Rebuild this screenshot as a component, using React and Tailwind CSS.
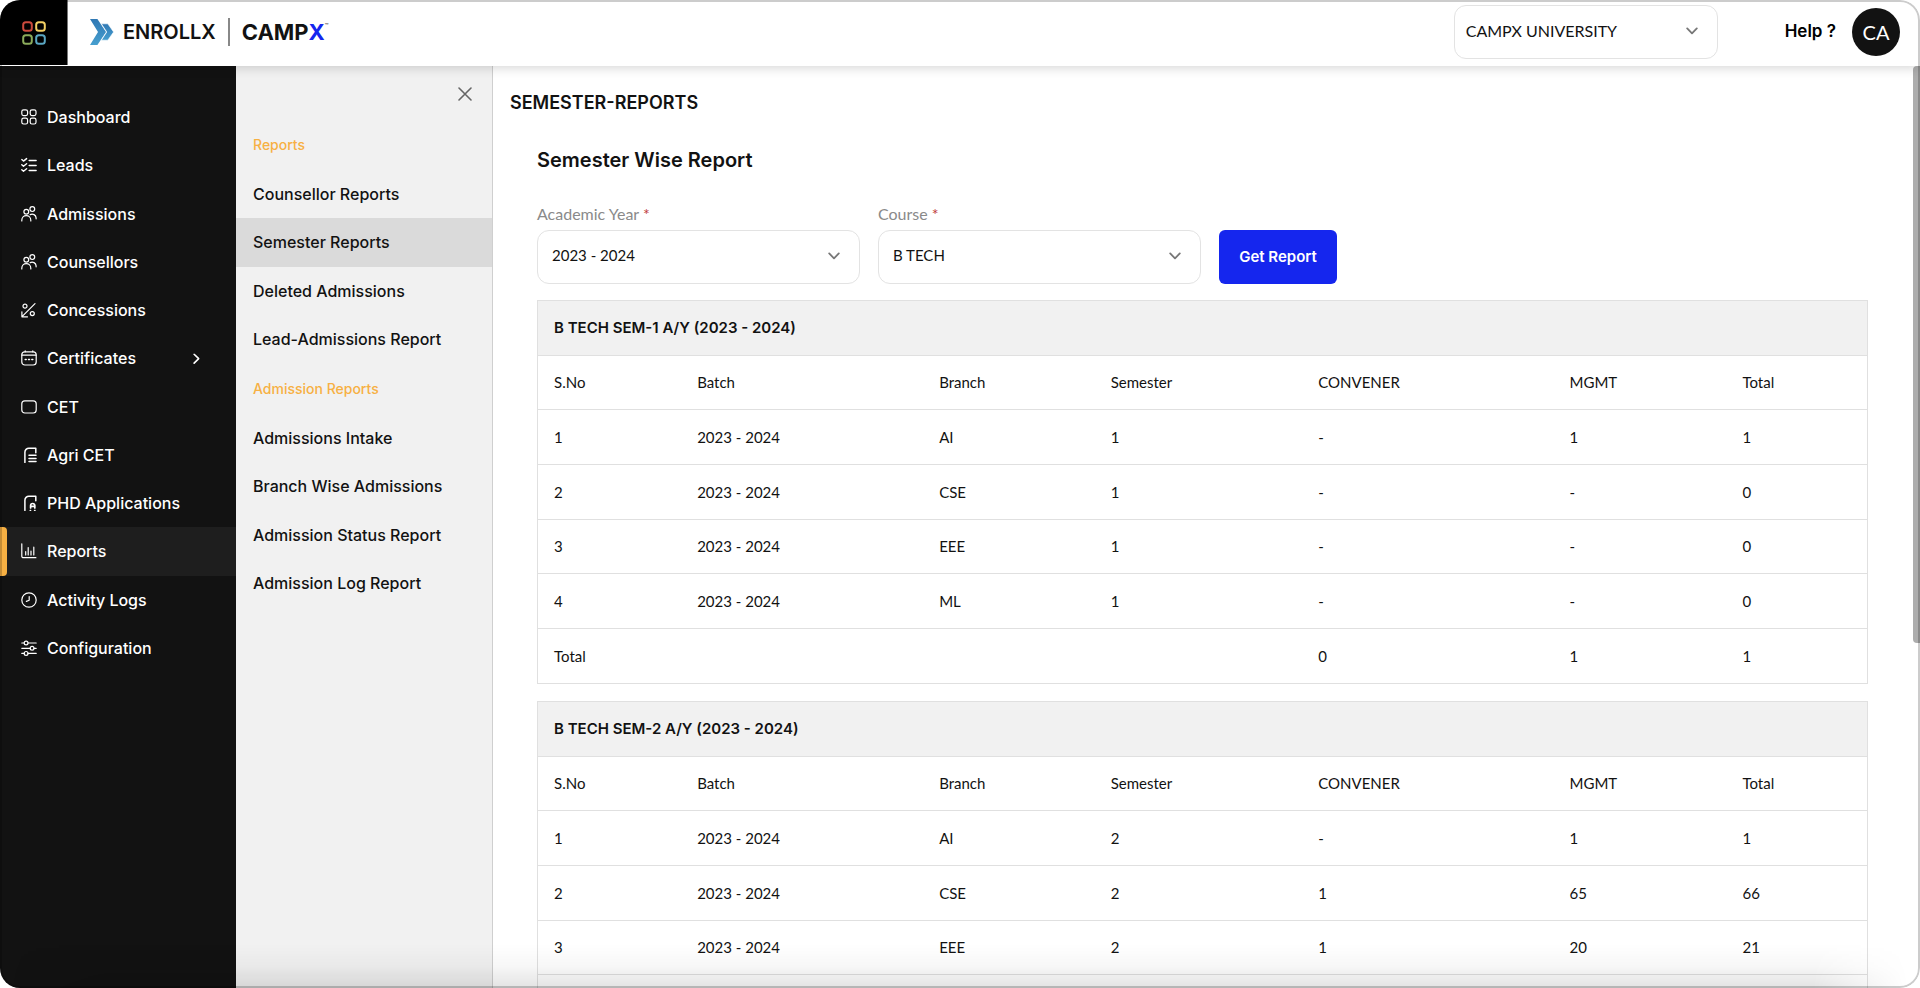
import React from "react";

const svgProps = {
  viewBox: "0 0 16 16",
  fill: "none",
  stroke: "currentColor",
  strokeLinecap: "round",
  strokeLinejoin: "round",
  "aria-hidden": true,
};

const icons = {
  dashboard: (
    <>
      <rect x="0.8" y="0.8" width="5.8" height="5.8" rx="1.8" />
      <rect x="9.2" y="0.8" width="5.8" height="5.8" rx="1.8" />
      <rect x="0.8" y="9.2" width="5.8" height="5.8" rx="1.8" />
      <rect x="9.2" y="9.2" width="5.8" height="5.8" rx="1.8" />
    </>
  ),
  leads: (
    <>
      <path d="M0.8 2.6l1.7 1.5L5.6 1.6M0.8 7.7l1.7 1.5 3.1-2.5M0.8 12.8l1.7 1.5 3.1-2.5" strokeWidth="1.4" />
      <path d="M8.2 3.4h6.9M8.2 8.4h6.9M8.2 13.5h6.9" strokeWidth="1.5" />
    </>
  ),
  people: (
    <>
      <circle cx="5.3" cy="5.7" r="2.4" />
      <circle cx="11.3" cy="3.1" r="2.4" />
      <path d="M0.8 15v-.8a4.5 4.5 0 0 1 9 0v.8M9.2 8.6a4 4 0 0 1 5.9 3.3v.9" />
    </>
  ),
  concessions: (
    <>
      <path d="M14 1.6L1 14.6M0.9 9.8v5h5.6" />
      <circle cx="4" cy="4.2" r="2" />
      <circle cx="11.3" cy="11.6" r="2" />
    </>
  ),
  certificates: (
    <>
      <rect x="0.8" y="1.8" width="14.4" height="13.2" rx="3" />
      <path d="M1 5.2h14M4.2 0.8v1M11.8 0.8v1" />
      <path d="M4.2 9.4h1M7.5 9.4h1M10.8 9.4h1" strokeWidth="1.5" />
    </>
  ),
  cet: <rect x="0.8" y="1.8" width="14.4" height="12.2" rx="3" />,
  agri: (
    <>
      <path d="M3.9 15.4V5.2a4 4 0 0 1 4-4h6.9v4.6" strokeWidth="1.5" />
      <path d="M8 8.2h7M8 11.4h7M8 14.4h7" strokeWidth="1.5" />
    </>
  ),
  phd: (
    <>
      <path d="M3.9 15.4V5.2a4 4 0 0 1 4-4h6.9v4.6" strokeWidth="1.5" />
      <path d="M9.6 13v-2.400a2.100 2.100 0 0 1 4.200 0v2.400M9.600 11.400h4.200" strokeWidth="1.7" />
      <path d="M9 15.300h.8M13.400 15.300h.8" strokeWidth="1.2" />
    </>
  ),
  reports: <path d="M0.8 0.8v12.4a1.5 1.5 0 0 0 1.5 1.5h12.6M4.7 12V8.6M7.2 12V4.6M10 12V8M12.8 12V4.2" />,
  activity: (
    <>
      <circle cx="8" cy="8" r="7.2" />
      <path d="M8.2 4.6v3.6L5.4 9.4" />
    </>
  ),
  configuration: (
    <>
      <path d="M0.8 3h2.4M7 3h8.2M0.8 8.3h8.4M13 8.3h2.2M0.8 13.4h2.4M7 13.4h8.2" />
      <circle cx="5.1" cy="3" r="1.9" />
      <circle cx="11.1" cy="8.3" r="1.9" />
      <circle cx="5.1" cy="13.4" r="1.9" />
    </>
  ),
};

const navItems = [
  ["Dashboard", "dashboard"],
  ["Leads", "leads"],
  ["Admissions", "people"],
  ["Counsellors", "people"],
  ["Concessions", "concessions"],
  ["Certificates", "certificates"],
  ["CET", "cet"],
  ["Agri CET", "agri"],
  ["PHD Applications", "phd"],
  ["Reports", "reports"],
  ["Activity Logs", "activity"],
  ["Configuration", "configuration"],
];

const subNav = [
  {
    heading: "Reports",
    items: ["Counsellor Reports", "Semester Reports", "Deleted Admissions", "Lead-Admissions Report"],
  },
  {
    heading: "Admission Reports",
    items: ["Admissions Intake", "Branch Wise Admissions", "Admission Status Report", "Admission Log Report"],
  },
];

const columns = [
  ["S.No", "w-[10.8%]"],
  ["Batch", "w-[18.2%]"],
  ["Branch", "w-[12.9%]"],
  ["Semester", "w-[15.6%]"],
  ["CONVENER", "w-[18.9%]"],
  ["MGMT", "w-[13%]"],
  ["Total", "w-[10.6%]"],
];

const tables = [
  {
    title: "B TECH SEM-1 A/Y (2023 - 2024)",
    rows: [
      ["1", "2023 - 2024", "AI", "1", "-", "1", "1"],
      ["2", "2023 - 2024", "CSE", "1", "-", "-", "0"],
      ["3", "2023 - 2024", "EEE", "1", "-", "-", "0"],
      ["4", "2023 - 2024", "ML", "1", "-", "-", "0"],
      ["Total", "", "", "", "0", "1", "1"],
    ],
  },
  {
    title: "B TECH SEM-2 A/Y (2023 - 2024)",
    rows: [
      ["1", "2023 - 2024", "AI", "2", "-", "1", "1"],
      ["2", "2023 - 2024", "CSE", "2", "1", "65", "66"],
      ["3", "2023 - 2024", "EEE", "2", "1", "20", "21"],
      ["", "", "", "", "", "", ""],
    ],
  },
];

function Chevron({ className }) {
  return (
    <svg viewBox="0 0 12 8" className={className} fill="none" stroke="currentColor" strokeWidth="1.8" strokeLinecap="round" strokeLinejoin="round" aria-hidden="true">
      <path d="M1.2 1.4L6 6.4l4.8-5" />
    </svg>
  );
}

function SelectBox({ id, value, label, padding }) {
  return (
    <div className="relative">
      <select
        id={id}
        aria-label={label}
        defaultValue={value}
        className={`h-[54px] w-full appearance-none rounded-xl border border-[#e3e3e3] bg-white pb-[3px] font-['Lato',sans-serif] text-[#121212] ${padding}`}
      >
        <option>{value}</option>
      </select>
      <Chevron className="pointer-events-none absolute top-[22px] right-5 w-3 text-[#777]" />
    </div>
  );
}

function Header() {
  return (
    <header className="relative z-10 flex h-[66px] shrink-0 items-center bg-white pr-5 pb-0.5 shadow-[0_2px_10px_rgba(0,0,0,0.16)]">
      <button type="button" aria-label="Apps" className="mb-px flex h-[65px] w-[68px] items-center justify-center self-start border-r border-[#777] bg-black">
        <svg viewBox="0 0 24 24" className="w-6" fill="none" strokeWidth="2" aria-hidden="true">
          <rect x="1.2" y="1.2" width="8.6" height="8.6" rx="2.6" stroke="#cb4a3d" />
          <rect x="14.2" y="1.2" width="8.6" height="8.6" rx="2.6" stroke="#f2cf63" />
          <rect x="1.2" y="14.2" width="8.6" height="8.6" rx="2.6" stroke="#8bab5b" />
          <rect x="14.2" y="14.2" width="8.6" height="8.6" rx="2.6" stroke="#5aa6c2" />
        </svg>
      </button>
      <a href="#home" className="ml-[22px] flex items-center">
        <svg viewBox="0 0 24 26" className="w-6" aria-hidden="true">
          <defs>
            <linearGradient id="arrow" x1="0" y1="0" x2="0" y2="1">
              <stop offset="0" stopColor="#2f78b4" />
              <stop offset="1" stopColor="#479fcf" />
            </linearGradient>
          </defs>
          <path fill="url(#arrow)" d="M0 0h7.4l8.6 13-8.6 13H0l8-13z" />
          <path fill="url(#arrow)" stroke="#fff" strokeWidth="0.6" d="M11.4 4.800h6.400L23.600 13l-5.800 8.200h-6.400L16.800 13z" />
        </svg>
        <span className="ml-[9px] text-[20px] leading-7 font-semibold text-[#121212]">ENROLLX</span>
        <span className="mx-3 h-7 w-0.5 bg-[#888]" />
        <span className="flex items-start text-[22px] leading-7 font-bold text-[#121212]">
          CAMP<span className="text-[#1526ee]">X</span>
          <span className="text-[6px] leading-4 font-normal">™</span>
        </span>
      </a>
      <div className="ml-auto w-[264px]">
        <SelectBox id="university" label="University" value="CAMPX UNIVERSITY" padding="px-[11px] text-base" />
      </div>
      <a href="#help" className="ml-[67px] text-[17px] font-semibold text-black">Help ?</a>
      <button type="button" aria-label="Account" className="ml-4 size-12 rounded-full bg-[#121212] font-['Lato',sans-serif] text-xl text-white">
        CA
      </button>
    </header>
  );
}

function Sidebar() {
  return (
    <nav aria-label="Main" className="w-[236px] shrink-0 bg-[#121212] pt-[27px]">
      <ul className="grid h-[579px] auto-rows-fr">
        {navItems.map(([label, icon]) => (
          <li key={label}>
            <a
              href="#nav"
              className={`relative flex h-full items-center gap-2.5 pl-[21px] text-base font-medium text-white ${label === "Reports" ? "bg-[#1e1e1e]" : ""}`}
            >
              {label === "Reports" && <span className="absolute inset-y-0 left-0 w-[7px] rounded-r bg-[#f7b043]" />}
              <svg {...svgProps} className="size-4 shrink-0" strokeWidth="1.2">{icons[icon]}</svg>
              {label}
              {label === "Certificates" && <Chevron className="mr-[34px] ml-auto w-[11px] -rotate-90" />}
            </a>
          </li>
        ))}
      </ul>
    </nav>
  );
}

function SubNav() {
  return (
    <nav aria-label="Reports" className="w-[257px] shrink-0 border-r border-[#cfcfcf] bg-[#f1f1f1] pt-[21px]">
      <div className="flex h-8 items-start justify-end pr-5">
        <button type="button" aria-label="Close" className="text-[#666]">
          <svg viewBox="0 0 14 14" className="size-3.5" fill="none" stroke="currentColor" strokeWidth="1.6" strokeLinecap="round" aria-hidden="true">
            <path d="M1 1l12 12M13 1L1 13" />
          </svg>
        </button>
      </div>
      {subNav.map((group) => (
        <section key={group.heading}>
          <h2 className="flex h-[51px] items-center pl-[17px] text-sm font-medium text-[#f7b043]">{group.heading}</h2>
          <ul className="grid h-[193px] auto-rows-fr">
            {group.items.map((item) => (
              <li key={item}>
                <a
                  href="#report"
                  className={`flex h-full items-center pl-[17px] text-base font-medium text-[#121212] ${item === "Semester Reports" ? "bg-[#dadada]" : ""}`}
                >
                  {item}
                </a>
              </li>
            ))}
          </ul>
        </section>
      ))}
    </nav>
  );
}

function Field({ id, label, value }) {
  return (
    <div className="w-[323px]">
      <label htmlFor={id} className="mb-1.5 block font-['Lato',sans-serif] text-base leading-5 text-[#8a8a8a]">
        {label} <span className="text-[#c03a3a]">*</span>
      </label>
      <SelectBox id={id} value={value} padding="px-3.5 text-[15px]" />
    </div>
  );
}

function ReportTable({ title, rows }) {
  return (
    <table className="w-full table-fixed border-collapse border border-[#e0e0e0] text-left font-['Lato',sans-serif] text-[15px] text-[#121212]">
      <colgroup>
        {columns.map(([name, width]) => (
          <col key={name} className={width} />
        ))}
      </colgroup>
      <thead>
        <tr className="h-[55px] border-b border-[#e0e0e0] bg-[#f1f1f1]">
          <th colSpan={7} className="px-4 font-['Inter',sans-serif] text-[15px] font-semibold">{title}</th>
        </tr>
        <tr className="h-[54px] border-b border-[#e0e0e0]">
          {columns.map(([name]) => (
            <th key={name} className="px-4 font-normal">{name}</th>
          ))}
        </tr>
      </thead>
      <tbody>
        {rows.map((row, r) => (
          <tr key={r} className="h-[55px] border-b border-[#e0e0e0] nth-[3n]:h-[54px]">
            {row.map((cell, c) => (
              <td key={c} className="px-4">{cell}</td>
            ))}
          </tr>
        ))}
      </tbody>
    </table>
  );
}

export default function App() {
  return (
    <div className="relative flex h-screen flex-col overflow-hidden rounded-[20px] bg-white font-['Inter',sans-serif]">
      <Header />
      <div className="flex min-h-0 flex-1">
        <Sidebar />
        <SubNav />
        <main className="min-w-0 flex-1 overflow-y-auto pt-[25px] pr-[52px] pl-[17px] text-[#121212] [scrollbar-width:none]">
          <h1 className="text-lg leading-6 font-semibold">SEMESTER-REPORTS</h1>
          <div className="pt-[33px] pl-[27px]">
            <h2 className="text-xl leading-6 font-semibold">Semester Wise Report</h2>
            <form className="mt-8 flex items-end gap-[18px]" onSubmit={(e) => e.preventDefault()}>
              <Field id="year" label="Academic Year" value="2023 - 2024" />
              <Field id="course" label="Course" value="B TECH" />
              <button type="submit" className="h-[54px] w-[118px] rounded-md bg-[#1526ee] text-[15px] font-semibold text-white">
                Get Report
              </button>
            </form>
            <div className="mt-4 flex flex-col gap-[17px]">
              {tables.map((t) => (
                <ReportTable key={t.title} {...t} />
              ))}
            </div>
          </div>
        </main>
      </div>
      <div className="pointer-events-none absolute top-[66px] right-0 h-[58.4%] w-[7px] rounded-l bg-[#adadad]" />
      <div className="pointer-events-none absolute right-3 bottom-0 left-3 h-11 bg-[linear-gradient(to_top,rgba(0,0,0,0.11),rgba(0,0,0,0.03)_50%,transparent)] mask-[linear-gradient(to_right,transparent,black_5%,black_95%,transparent)]" />
      <div className="pointer-events-none absolute inset-0 z-20 rounded-[20px] border-2 border-black/20" />
    </div>
  );
}
